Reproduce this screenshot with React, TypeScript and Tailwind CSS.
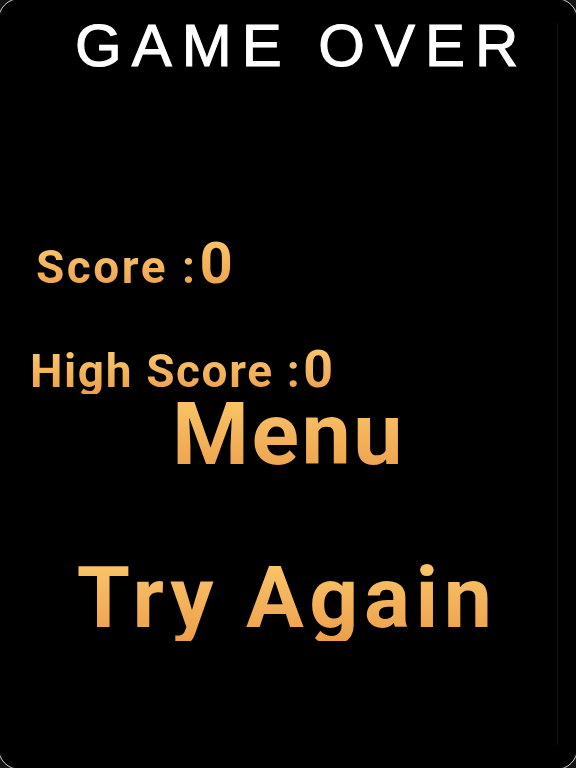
export default function App() {
  const orange =
    "bg-linear-to-b from-[#fbc96b] to-[#ec9f4b] bg-clip-text text-transparent"
  const roboto = "font-['Roboto',_'Noto_Sans',_sans-serif] font-bold"

  return (
    <div className="h-[768px] w-[576px] overflow-hidden bg-[#141414]">
      {/* frame */}
      <div className="-m-[2px] flex h-[772px] w-[580px] rounded-[22px] border-[1.5px] border-[#cfcfcf] bg-black p-[2px]">
        <div className="flex flex-1 flex-col">
          {/* Title */}
          <div className="mt-[15px] pl-[74px] font-['Liberation_Sans',_Arial,_sans-serif] text-[60px] leading-none tracking-[10px] text-white [-webkit-text-stroke:1.1px_white]">
            GAME OVER
          </div>

          {/* Score */}
          <div className={`mt-[158px] flex items-baseline pl-[35px] ${roboto}`}>
            <span className={`text-[46px] leading-none tracking-[2.5px] ${orange}`}>
              Score :
            </span>
            <span className={`ml-[2px] text-[58px] leading-none ${orange}`}>0</span>
          </div>

          {/* High score */}
          <div className={`mt-[52px] flex items-baseline pl-[29px] ${roboto}`}>
            <span className={`text-[46px] leading-none tracking-[1.6px] ${orange}`}>
              High Score :
            </span>
            <span className={`ml-[2px] text-[52px] leading-none ${orange}`}>0</span>
          </div>

          {/* Buttons */}
          <button className={`-mt-[6px] self-center pl-[19px] text-[88px] leading-none tracking-[2.5px] ${roboto} ${orange}`}>
            Menu
          </button>
          <button className={`mt-[77px] self-center pl-[16px] text-[86px] leading-none tracking-[5.5px] ${roboto} ${orange}`}>
            Try Again
          </button>
        </div>

        {/* faint divider on the right */}
        <div className="my-[22px] w-px bg-[#131313]" />
        <div className="w-[17px]" />
      </div>
    </div>
  )
}
